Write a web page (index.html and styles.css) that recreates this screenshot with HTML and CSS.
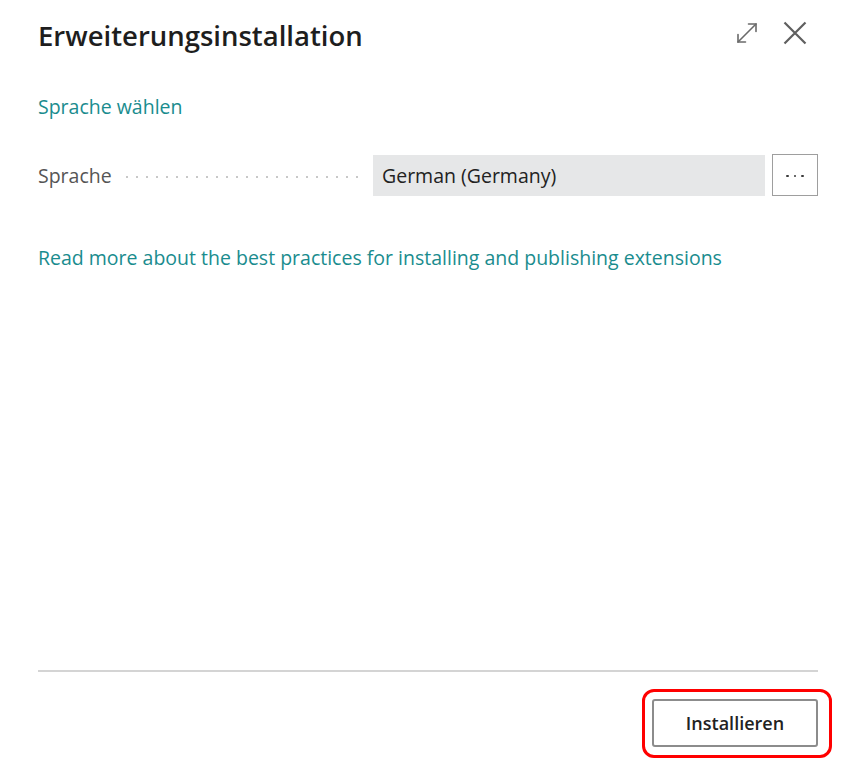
FILE: index.html
```html
<!DOCTYPE html>
<html lang="de">
<head>
<meta charset="utf-8">
<link rel="stylesheet" href="styles.css">
</head>
<body>
<div class="dialog">
  <header class="head">
    <h1 class="title">Erweiterungsinstallation</h1>
    <div class="tools">
      <svg class="ico expand" width="22" height="22" viewBox="0 0 22 22" fill="none" stroke="#6a6a6a" stroke-width="1.6" stroke-linecap="round">
        <path d="M2 20 L20 2"/>
        <path d="M12.5 2 H20 V9.5"/>
        <path d="M2 12.5 V20 H9.5"/>
      </svg>
      <svg class="ico close" width="24" height="24" viewBox="0 0 24 24" fill="none" stroke="#5f5f5f" stroke-width="2.2">
        <path d="M1.5 1.5 L22.5 22.5 M22.5 1.5 L1.5 22.5"/>
      </svg>
    </div>
  </header>
  <main class="body">
    <div class="section-link">Sprache wählen</div>
    <div class="field">
      <div class="label">Sprache<span class="leader"></span></div>
      <div class="input">German (Germany)</div>
      <button class="more"><span class="dot"></span><span class="dot"></span><span class="dot"></span></button>
    </div>
    <div class="info-link">Read more about the best practices for installing and publishing extensions</div>
  </main>
  <footer class="foot">
    <div class="actions">
      <button class="install">Installieren</button>
      <span class="highlight"></span>
    </div>
  </footer>
</div>
</body>
</html>
```
FILE: styles.css
```css
* { box-sizing: border-box; }
html, body { margin: 0; padding: 0; background: #fff; }
body {
  font-family: "Open Sans", "Noto Sans", sans-serif;
  color: #212121;
  width: 868px;
  height: 777px;
  overflow: hidden;
}
.dialog {
  height: 777px;
  padding: 0 50px 0 38px;
  display: flex;
  flex-direction: column;
}
.head {
  display: flex;
  align-items: center;
  justify-content: space-between;
  height: 70px;
}
.title {
  margin: 0;
  font-size: 27.5px;
  font-weight: 600;
  letter-spacing: 0;
  color: #1e1e1e;
}
.tools {
  display: flex;
  align-items: center;
  gap: 25px;
  margin-right: 11px;
  margin-top: -4px;
}
.ico { display: block; }
.body { flex: 1; }
.section-link {
  margin-top: 24px;
  font-size: 19.5px;
  color: #1a8c8e;
  line-height: 26px;
}
.field {
  margin-top: 34px;
  display: flex;
  align-items: center;
  height: 42px;
}
.label {
  width: 335px;
  display: flex;
  align-items: center;
  font-size: 19.5px;
  color: #555;
}
.leader {
  flex: 1;
  margin: 4px 12px 0 10px;
  height: 2px;
  background-image: radial-gradient(circle, #c8c8c8 0.9px, transparent 1.2px);
  background-size: 10px 2px;
  background-repeat: repeat-x;
}
.input {
  width: 392px;
  height: 41px;
  background: #e6e7e8;
  font-size: 19.5px;
  color: #222;
  padding-left: 9px;
  display: flex;
  align-items: center;
}
.more {
  margin-left: 7px;
  width: 46px;
  height: 42px;
  border: 1px solid #9e9e9e;
  background: #fff;
  padding: 0;
  display: flex;
  align-items: center;
  justify-content: center;
  gap: 5px;
}
.dot {
  width: 2.5px;
  height: 2.5px;
  border-radius: 50%;
  background: #3a3a3a;
  margin-top: 2px;
}
.info-link {
  margin-top: 48px;
  font-size: 19.5px;
  color: #1a8c8e;
}
.foot {
  border-top: 2px solid #d4d4d4;
  height: 107px;
  display: flex;
  justify-content: flex-end;
}
.actions {
  position: relative;
  margin-top: 27px;
  height: 48px;
}
.install {
  width: 166px;
  height: 48px;
  border: 2px solid #8c8c8c;
  border-radius: 3px;
  background: #fff;
  font-family: "Open Sans", sans-serif;
  font-size: 18px;
  font-weight: 600;
  color: #222;
}
.highlight {
  position: absolute;
  left: -10px;
  top: -10px;
  right: -14px;
  bottom: -11px;
  border: 3px solid #ff0000;
  border-radius: 12px;
}
```
